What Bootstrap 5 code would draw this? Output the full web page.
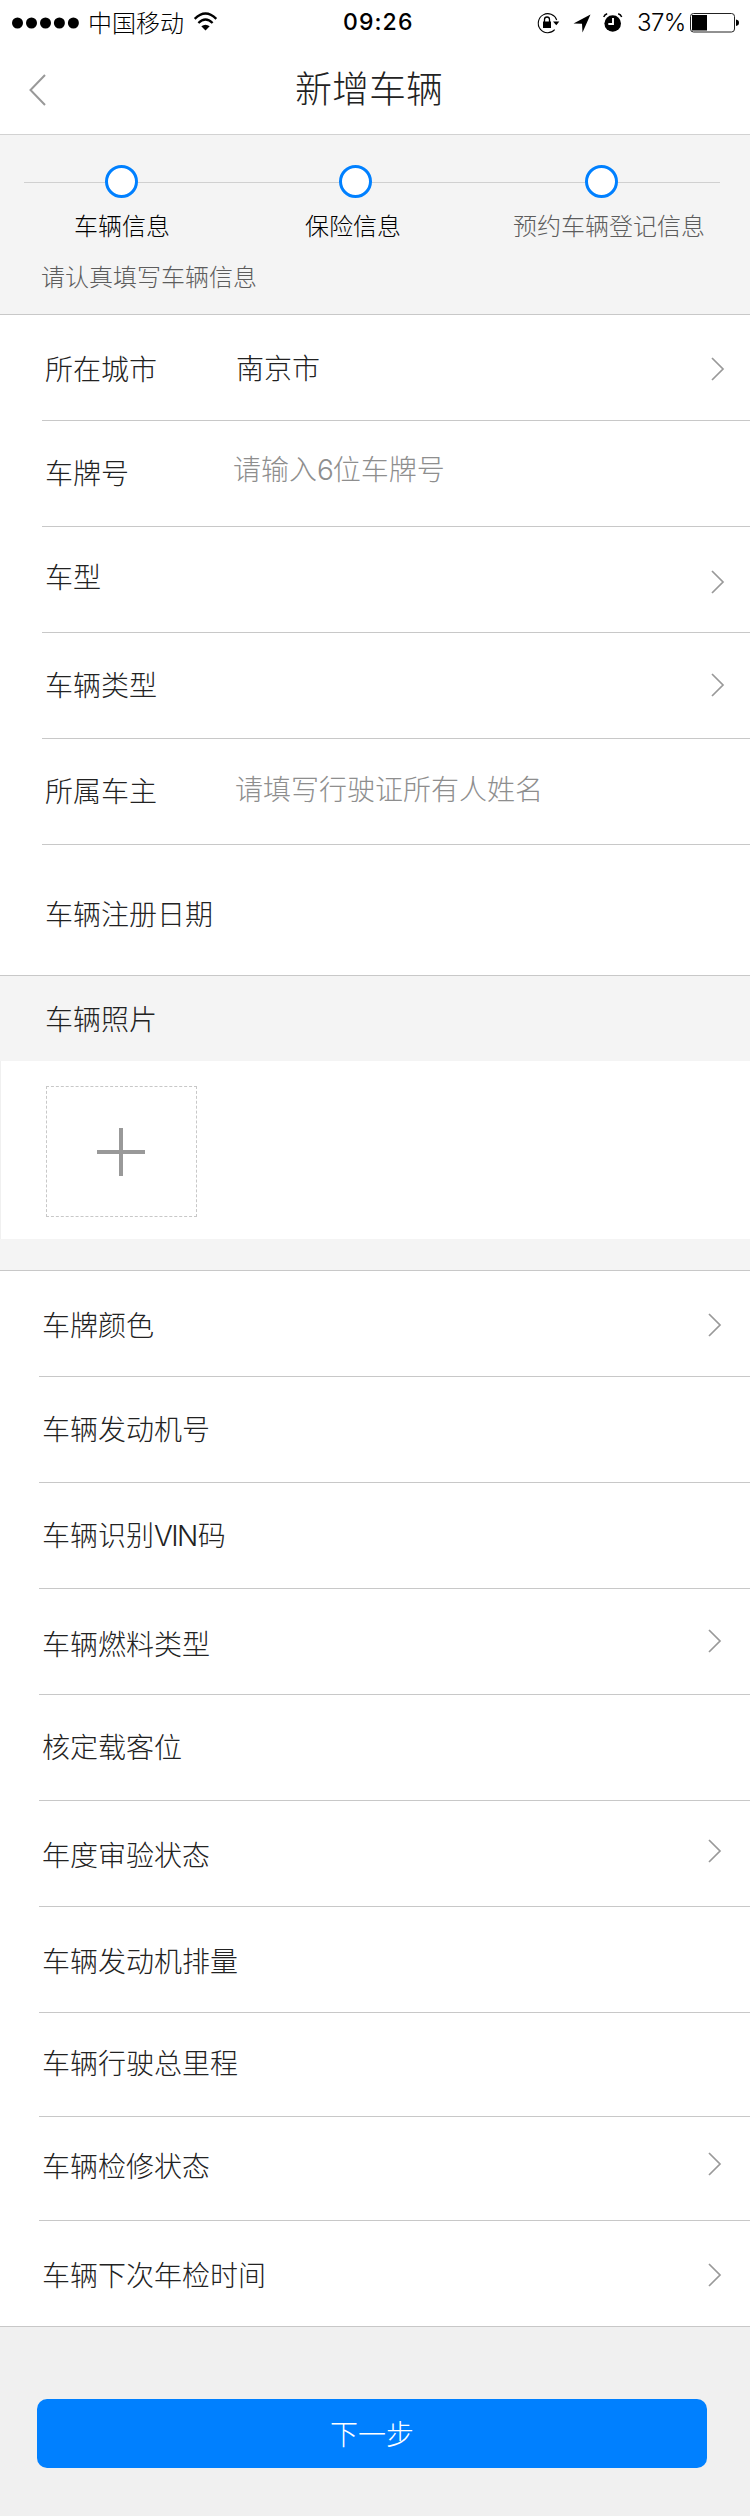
<!DOCTYPE html>
<html lang="zh-CN">
<head>
<meta charset="utf-8">
<meta name="viewport" content="width=device-width, initial-scale=1">
<title>新增车辆</title>
<link href="https://cdn.jsdelivr.net/npm/bootstrap@5.3.0/dist/css/bootstrap.min.css" rel="stylesheet">
<style>
body{font-family:"Noto Sans CJK SC",sans-serif;font-weight:300;font-size:28px;line-height:40px;color:#222;background:#f0f0f0;width:750px}
svg{display:block;flex:none}
.status{height:45px;color:#000;font-size:24px;line-height:45px;padding:0 11px 0 12px}
.latin{font-family:Inter,sans-serif}
.carrier{margin-left:9px;width:96px;white-space:nowrap}
.wifi{margin-left:9px}
.clock{font-size:23px;font-weight:500;letter-spacing:1.1px;margin-left:124px}
.pct{font-size:24px;margin-left:13px;width:53px;letter-spacing:-.6px;white-space:nowrap}
.titlebar{height:90px;border-bottom:1px solid #d2d2d2;padding:0 29px}
.titlebar h1{font-size:37px;font-weight:300;line-height:54px;color:#222;margin:-5px 0 0 249px}
.steps{height:179px;background:#f4f4f4;font-size:24px;line-height:34px;padding-top:30px}
.track{height:33px;margin:0 30px 0 24px;padding-left:81px;background:linear-gradient(#d0d0d0,#d0d0d0) 0 17px/100% 1px no-repeat}
.dot{width:33px;height:33px;border:3px solid #0080ff;border-radius:50%;background:#fff}
.gap-a{margin-left:201px}.gap-b{margin-left:213px}
.names{padding-left:74px;margin-top:10px;color:#000}
.name-b{margin-left:135px}.name-c{margin-left:112px}
.hint,.muted{color:#5c5c5c}
.hint{margin:17px 0 0 41px}
.form-list{background:#fff;border-top:1px solid #c8c8c8}
.item{height:106px;margin-left:42px;border-bottom:1px solid #c8c8c8;padding-left:3px;padding-right:25px}
.item:last-child{margin-left:0;padding-left:45px}
.tall{height:131px}
.second .item{margin-left:39px;padding-right:28px}
.second .item:last-child{margin-left:0;padding-left:42px}
.second .short{height:104px}
.field-name{width:191px;white-space:nowrap}
.field-name.narrow{width:188px}
.field-name.mid{width:190px}
.ph{color:#8e8e8e}
.vin{font-family:Inter,sans-serif;letter-spacing:-1.6px;margin-right:1px}
.six{font-family:Inter,sans-serif;letter-spacing:-1.2px}
.caption{height:85px;background:#f4f4f4;padding-left:45px}
.photos{height:178px;background:#fff;margin-left:1px;padding:25px 0 0 45px}
.adder{width:151px;height:131px;border:1px dashed #c8c8c8;padding-right:1px}
.spacer{height:31px;background:#f4f4f4}
.next{width:670px;height:69px;margin:72px 0 48px 37px;border-radius:10px;background:#0080ff;color:#fff;font-size:28px;font-weight:300;border:0;padding-bottom:8px}
.u1{transform:translateY(-1px)}.u2{transform:translateY(-2px)}.u3{transform:translateY(-3px)}.u4{transform:translateY(-4px)}.u5{transform:translateY(-5px)}
.d1{transform:translateY(1px)}.d2{transform:translateY(2px)}.d3{transform:translateY(3px)}
</style>
</head>
<body>
<svg width="0" height="0" class="position-absolute"><defs>
<symbol id="chev" viewBox="0 0 14 24"><path d="M1 1 12 12 1 23" fill="none" stroke="#999" stroke-width="1.7"/></symbol>
</defs></svg>
<header class="bg-white">
  <div class="status d-flex align-items-center">
    <svg width="67" height="12" viewBox="0 0 67 12"><circle cx="5.5" cy="6" r="5.5"/><circle cx="19.5" cy="6" r="5.5"/><circle cx="33.5" cy="6" r="5.5"/><circle cx="47.4" cy="6" r="5.5"/><circle cx="61.4" cy="6" r="5.5"/></svg>
    <span class="u1 carrier">中国移动</span>
    <svg class="wifi u1" width="26" height="19" viewBox="0 0 26 19"><g fill="none" stroke="#000" stroke-width="2.3"><path d="M1.700 6.900Q12.500-3.900 23.300 6.900"/><path d="M5.400 11Q12.500 4 19.600 11"/></g><path d="M8.300 14.300Q12.500 11 16.700 14.300L12.500 18.400Z"/></svg>
    <span class="clock latin">09:26</span>
    <svg class="ms-auto" width="88" height="22" viewBox="0 0 88 22">
      <g transform="translate(1 0)"><path d="M19.700 8A9.500 9.500 0 1 0 17.700 17.700" fill="none" stroke="#000" stroke-width="1.100"/><path d="M16 9.500H22.300L19.300 13.200Z"/><rect x="6" y="9.500" width="8" height="6.500"/><path d="M7.500 10V7.500a2.500 2.500 0 0 1 5 0V10" fill="none" stroke="#000" stroke-width="1.300"/></g>
      <path d="M54.500 2.500 46.500 20.500 46 11.800 37.500 11.500Z"/>
      <circle cx="76.700" cy="11.500" r="8.300"/><path d="M77 6V12H72.300" fill="none" stroke="#fff" stroke-width="1.900"/><path d="M67.700 5Q68.700 2.500 71.200 1.800M85.700 5Q84.700 2.500 82.200 1.800" fill="none" stroke="#000" stroke-width="1.500"/>
    </svg>
    <span class="pct latin">37%</span>
    <svg width="49" height="20" viewBox="0 0 49 20"><rect x=".5" y=".5" width="44" height="18.500" rx="3" fill="#fff" stroke="#222"/><rect x="2" y="2" width="15" height="15.500"/><path d="M46 6.500Q49 7 49 9.700T46 13Z"/></svg>
  </div>
  <div class="titlebar d-flex align-items-center">
    <svg width="17" height="32" viewBox="0 0 17 32"><path d="M16 1 1.500 16 16 31" fill="none" stroke="#999" stroke-width="2"/></svg>
    <h1 class="text-nowrap">新增车辆</h1>
  </div>
</header>
<section class="steps">
  <div class="track d-flex"><span class="dot"></span><span class="dot gap-a"></span><span class="dot gap-b"></span></div>
  <div class="names d-flex"><span>车辆信息</span><span class="name-b">保险信息</span><span class="name-c muted">预约车辆登记信息</span></div>
  <p class="hint mb-0">请认真填写车辆信息</p>
</section>
<section class="form-list">
  <div class="item d-flex align-items-center"><span class="field-name">所在城市</span><span class="u1">南京市</span><svg class="ms-auto d1" width="14" height="24"><use href="#chev"/></svg></div>
  <div class="item d-flex align-items-center"><span class="field-name narrow u2">车牌号</span><span class="ph u5">请输入<span class="six">6</span>位车牌号</span></div>
  <div class="item d-flex align-items-center"><span class="field-name u4">车型</span><svg class="ms-auto d2" width="14" height="24"><use href="#chev"/></svg></div>
  <div class="item d-flex align-items-center"><span class="field-name u2">车辆类型</span><svg class="ms-auto u1" width="14" height="24"><use href="#chev"/></svg></div>
  <div class="item d-flex align-items-center"><span class="field-name mid u2">所属车主</span><span class="ph u4">请填写行驶证所有人姓名</span></div>
  <div class="item tall d-flex align-items-center"><span class="field-name d3">车辆注册日期</span></div>
</section>
<section>
  <div class="caption d-flex align-items-center"><span class="u1">车辆照片</span></div>
  <div class="photos"><div class="adder d-flex align-items-center justify-content-center"><svg width="48" height="48" viewBox="0 0 48 48"><path d="M24 0V48M0 24H48" stroke="#999" stroke-width="4"/></svg></div></div>
  <div class="spacer"></div>
</section>
<section class="form-list second">
  <div class="item d-flex align-items-center"><span class="field-name">车牌颜色</span><svg class="ms-auto d1" width="14" height="24"><use href="#chev"/></svg></div>
  <div class="item d-flex align-items-center"><span class="field-name u2">车辆发动机号</span></div>
  <div class="item d-flex align-items-center"><span class="field-name u1">车辆识别<span class="vin">VIN</span>码</span></div>
  <div class="item d-flex align-items-center"><span class="field-name d1">车辆燃料类型</span><svg class="ms-auto u1" width="14" height="24"><use href="#chev"/></svg></div>
  <div class="item d-flex align-items-center"><span class="field-name u2">核定载客位</span></div>
  <div class="item d-flex align-items-center"><span class="field-name">年度审验状态</span><svg class="ms-auto u3" width="14" height="24"><use href="#chev"/></svg></div>
  <div class="item d-flex align-items-center"><span class="field-name">车辆发动机排量</span></div>
  <div class="item short d-flex align-items-center"><span class="field-name u3">车辆行驶总里程</span></div>
  <div class="item short d-flex align-items-center"><span class="field-name u4">车辆检修状态</span><svg class="ms-auto u5" width="14" height="24"><use href="#chev"/></svg></div>
  <div class="item d-flex align-items-center"><span class="field-name">车辆下次年检时间</span><svg class="ms-auto d1" width="14" height="24"><use href="#chev"/></svg></div>
</section>
<button class="next btn d-flex align-items-center justify-content-center" type="button">下一步</button>
<script src="https://cdn.jsdelivr.net/npm/bootstrap@5.3.0/dist/js/bootstrap.bundle.min.js"></script>
</body>
</html>
